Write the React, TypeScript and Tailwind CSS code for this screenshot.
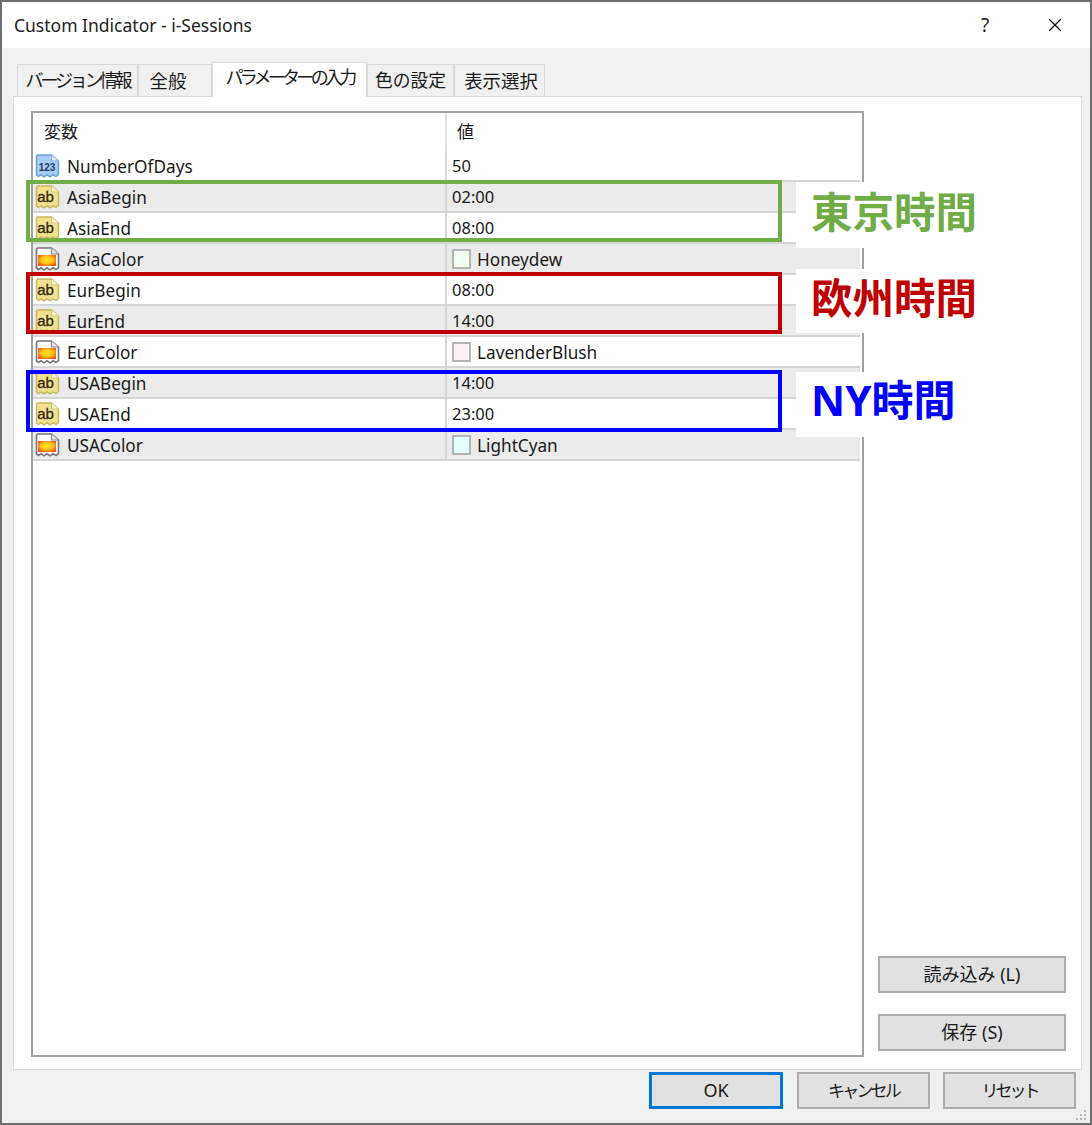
import { X } from "lucide-react";

type Row = {
  name: string;
  value: string;
  kind: "num" | "str" | "color";
  swatch?: string;
};

const rows: Row[] = [
  { name: "NumberOfDays", value: "50", kind: "num" },
  { name: "AsiaBegin", value: "02:00", kind: "str" },
  { name: "AsiaEnd", value: "08:00", kind: "str" },
  { name: "AsiaColor", value: "Honeydew", kind: "color", swatch: "bg-[#f0fff0]" },
  { name: "EurBegin", value: "08:00", kind: "str" },
  { name: "EurEnd", value: "14:00", kind: "str" },
  { name: "EurColor", value: "LavenderBlush", kind: "color", swatch: "bg-[#fff0f5]" },
  { name: "USABegin", value: "14:00", kind: "str" },
  { name: "USAEnd", value: "23:00", kind: "str" },
  { name: "USAColor", value: "LightCyan", kind: "color", swatch: "bg-[#e0ffff]" },
];

const tabs = [
  { label: "バージョン情報", cls: "w-[121px] text-[18px] tracking-[-3.1px]" },
  { label: "全般", cls: "w-[74px] text-[18.5px] pr-[14px]" },
  { label: "パラメーターの入力", cls: "w-[155px] text-[18px] tracking-[-3.7px]", active: true },
  { label: "色の設定", cls: "w-[87px] text-[17.8px]" },
  { label: "表示選択", cls: "w-[91px] text-[18.4px] pl-[3px]" },
];

const docPath = "M1.5 2.5Q1.5 1 3 1H16.5L23.5 7V20.5L21 22.5 18 20.8 15 22.8 12 20.8 9 22.8 6 20.8 3.5 22.5 1.5 21Z";

function ParamIcon({ kind }: { kind: Row["kind"] }) {
  if (kind === "color") {
    return (
      <svg width="25" height="24" viewBox="0 0 25 24" className="shrink-0">
        <defs>
          <radialGradient id="swatchGlow" cx="50%" cy="45%" r="60%">
            <stop offset="0%" stopColor="#ffe21e" />
            <stop offset="55%" stopColor="#ffc31a" />
            <stop offset="100%" stopColor="#f4560e" />
          </radialGradient>
        </defs>
        <path d={docPath} fill="#fbfbfb" stroke="#77777a" strokeWidth="1.6" />
        <path d="M16.5 1V7H23.5" fill="#e6e6e6" stroke="#8a8a8a" strokeWidth="1.2" />
        <rect x="3" y="8" width="18" height="11" fill="url(#swatchGlow)" />
      </svg>
    );
  }
  const isNum = kind === "num";
  return (
    <svg width="25" height="24" viewBox="0 0 25 24" className="shrink-0">
      <path
        d={docPath}
        fill={isNum ? "#a8cdf0" : "#f1e08e"}
        stroke={isNum ? "#5f9fd8" : "#c8b55c"}
        strokeWidth="1.4"
      />
      <path d="M16.5 1V7H23.5" fill={isNum ? "#dcecfa" : "#fbf5d2"} stroke={isNum ? "#7fb2e0" : "#d3c277"} strokeWidth="1" />
      <text
        x={isNum ? 12 : 10.5}
        y={17}
        textAnchor="middle"
        fontFamily="Liberation Sans, sans-serif"
        fontWeight={isNum ? 700 : 400}
        fontSize={isNum ? 10 : 15}
        fill={isNum ? "#1d3b66" : "#2f2a14"}
        stroke={isNum ? "none" : "#2f2a14"}
        strokeWidth={isNum ? 0 : 0.3}
      >
        {isNum ? "123" : "ab"}
      </text>
    </svg>
  );
}

function DialogButton({ label, cls, focused }: { label: string; cls: string; focused?: boolean }) {
  return (
    <button
      className={`${cls} h-[37px] flex items-center justify-center bg-[#e1e1e1] text-[#1a1a1a] ${
        focused ? "border-[3px] border-[#0078d7]" : "border-2 border-[#adadad]"
      }`}
    >
      {label}
    </button>
  );
}

export default function App() {
  return (
    <div className="relative w-[1092px] h-[1125px] flex flex-col border-2 border-[#6e6e6e] bg-[#f0f0f0] text-[17.2px] text-[#1a1a1a] font-['Noto_Sans','Noto_Sans_CJK_JP',sans-serif] overflow-hidden">
      {/* title bar */}
      <div className="h-[46px] shrink-0 bg-white flex items-center pl-[12px]">
        <span className="flex-1 text-[17.5px] text-[#222]">Custom Indicator - i-Sessions</span>
        <span className="w-[20px] text-center text-[19px] mr-[49px]">?</span>
        <X size={22} strokeWidth={1.4} className="mr-[24px] text-[#111]" />
      </div>

      {/* tabs */}
      <div className="h-[48px] shrink-0 flex items-end pl-[15px]">
        <div className="flex items-end">
          {tabs.map((tab) => (
            <div
              key={tab.label}
              className={`${tab.cls} flex items-center justify-center border border-b-0 border-[#d9d9d9] ${
                tab.active
                  ? "h-[35px] bg-white pb-[6px] relative top-[1px]"
                  : "h-[32px] bg-[#f0f0f0]"
              }`}
            >
              {tab.label}
            </div>
          ))}
        </div>
      </div>

      {/* panel */}
      <div className="ml-[11px] mr-[8px] h-[974px] shrink-0 bg-white border border-[#d9d9d9] flex pl-[17px] pt-[14px] pb-[13px]">
        <div className="w-[833px] h-[946px] border-2 border-[#a0a0a0] bg-white">
          {/* header */}
          <div className="h-[38px] flex">
            <div className="w-[412px] pl-[11px] flex items-center text-[17px]">変数</div>
            <div className="border-l-2 border-[#e2e2e2] pl-[10px] flex items-center text-[17px]">値</div>
          </div>
          {rows.map((row, i) => (
            <div
              key={row.name}
              className={`h-[31px] flex w-[827px] border-b-2 border-[#d6d6d6] ${
                i % 2 === 1 ? "bg-[#ebebeb]" : "bg-white"
              } ${i === 0 ? "border-b-0" : ""}`}
            >
              <div className="w-[412px] pl-[2px] flex items-center gap-[7px]">
                <ParamIcon kind={row.kind} />
                <span className="pt-[2px]">{row.name}</span>
              </div>
              <div className="flex-1 border-l-2 border-[#d6d6d6] pl-[5px] flex items-center gap-[6px]">
                {row.swatch ? (
                  <span className={`${row.swatch} w-[19px] h-[20px] border-2 border-[#b4b4b4]`} />
                ) : null}
                <span className={`pt-[2px] ${row.swatch ? "" : "text-[16.5px]"}`}>{row.value}</span>
              </div>
            </div>
          ))}
        </div>

        <div className="ml-[14px] flex-1 flex flex-col justify-end gap-[21px] pb-[5px]">
          <DialogButton label="読み込み (L)" cls="w-[188px] text-[18px]" />
          <DialogButton label="保存 (S)" cls="w-[188px] text-[18px]" />
        </div>
      </div>

      {/* footer */}
      <div className="flex justify-end gap-[13px] pt-[2px] pr-[14px]">
        <DialogButton label="OK" cls="w-[134px] mr-[1px] text-[18px]" focused />
        <DialogButton label="キャンセル" cls="w-[133px] text-[17px] tracking-[-2.8px]" />
        <DialogButton label="リセット" cls="w-[133px] text-[17px] tracking-[-3px]" />
      </div>

      {/* size grip */}
      <svg width="12" height="12" viewBox="0 0 12 12" className="absolute right-[2px] bottom-[1px]" fill="#b5b5b5">
        <rect x="8" y="0" width="2" height="2" />
        <rect x="4" y="4" width="2" height="2" />
        <rect x="8" y="4" width="2" height="2" />
        <rect x="0" y="8" width="2" height="2" />
        <rect x="4" y="8" width="2" height="2" />
        <rect x="8" y="8" width="2" height="2" />
      </svg>

      {/* annotations laid over the table */}
      <div className="absolute left-[24px] top-[178px] w-[756px] h-[62px] border-[4px] border-[#70ad47]" />
      <div className="absolute left-[24px] top-[270px] w-[756px] h-[62px] border-[4px] border-[#c00000]" />
      <div className="absolute left-[24px] top-[368px] w-[756px] h-[62px] border-[4px] border-[#0000ff]" />

      <div className="absolute left-[794px] top-[180px] w-[70px] h-[66px] bg-white" />
      <div className="absolute left-[794px] top-[267px] w-[70px] h-[64px] bg-white" />
      <div className="absolute left-[794px] top-[370px] w-[70px] h-[65px] bg-white" />

      <div className="absolute left-[809px] top-[182px] text-[41.5px] leading-[56px] font-bold text-[#70ad47]">東京時間</div>
      <div className="absolute left-[809px] top-[268px] text-[41.5px] leading-[56px] font-bold text-[#c00000]">欧州時間</div>
      <div className="absolute left-[809px] top-[370px] text-[42px] leading-[56px] font-bold text-[#0000ff]">NY時間</div>
    </div>
  );
}
